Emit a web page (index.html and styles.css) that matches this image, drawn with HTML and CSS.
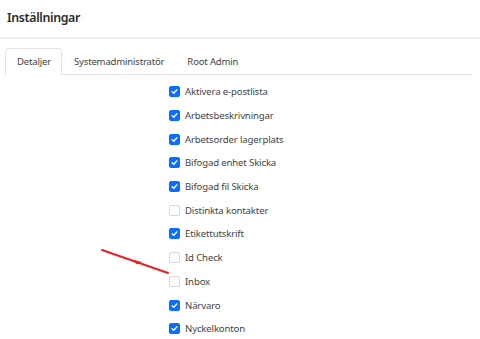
FILE: index.html
```html
<!DOCTYPE html>
<html lang="sv">

<head>
    <meta charset="UTF-8">
    <meta name="viewport" content="width=device-width, initial-scale=1.0">
    <title>Inställningar</title>
    <link rel="stylesheet" href="styles.css">
</head>

<body>
    <div class="header">
        <h1>Inställningar</h1>
    </div>
    <div class="content">
        <ul class="tabs">
            <li class="tab active">Detaljer</li>
            <li class="tab">Systemadministratör</li>
            <li class="tab">Root Admin</li>
        </ul>
        <div class="options">
            <label class="option"><span class="box checked"><svg viewBox="0 0 10 10"><path d="M2.4 5.2 L4.2 7 L7.6 3.2" /></svg></span>Aktivera e-postlista</label>
            <label class="option"><span class="box checked"><svg viewBox="0 0 10 10"><path d="M2.4 5.2 L4.2 7 L7.6 3.2" /></svg></span>Arbetsbeskrivningar</label>
            <label class="option"><span class="box checked"><svg viewBox="0 0 10 10"><path d="M2.4 5.2 L4.2 7 L7.6 3.2" /></svg></span>Arbetsorder lagerplats</label>
            <label class="option"><span class="box checked"><svg viewBox="0 0 10 10"><path d="M2.4 5.2 L4.2 7 L7.6 3.2" /></svg></span>Bifogad enhet Skicka</label>
            <label class="option"><span class="box checked"><svg viewBox="0 0 10 10"><path d="M2.4 5.2 L4.2 7 L7.6 3.2" /></svg></span>Bifogad fil Skicka</label>
            <label class="option"><span class="box"></span>Distinkta kontakter</label>
            <label class="option"><span class="box checked"><svg viewBox="0 0 10 10"><path d="M2.4 5.2 L4.2 7 L7.6 3.2" /></svg></span>Etikettutskrift</label>
            <label class="option"><span class="box"></span>Id Check</label>
            <label class="option"><span class="box"></span>Inbox</label>
            <label class="option"><span class="box checked"><svg viewBox="0 0 10 10"><path d="M2.4 5.2 L4.2 7 L7.6 3.2" /></svg></span>Närvaro</label>
            <label class="option"><span class="box checked"><svg viewBox="0 0 10 10"><path d="M2.4 5.2 L4.2 7 L7.6 3.2" /></svg></span>Nyckelkonton</label>
        </div>
        <!-- red annotation arrow -->
        <svg class="arrow" width="80" height="34" viewBox="0 0 80 34">
            <path d="M2 3 L68 26" stroke="#e8202a" stroke-width="2" stroke-linecap="round" fill="none" />
            <path d="M32 12.5 L42 15 L37 17.5 Z" fill="#e8202a" />
        </svg>
    </div>
</body>

</html>
```

FILE: styles.css
```css
body {
    margin: 0;
    background-color: #fff;
    font-family: 'Noto Sans', 'Open Sans', sans-serif;
    color: #333;
}

.header {
    padding: 8px 7px 10px;
    border-bottom: 2px solid #efefef;
}

h1 {
    margin: 0;
    font-size: 12.4px;
    font-weight: 600;
    letter-spacing: -0.35px;
    line-height: 19px;
    color: #2b2b2b;
}

.content {
    position: relative;
    margin: 9px 8px 0 5px;
}

.tabs {
    display: flex;
    list-style: none;
    margin: 0;
    padding: 0;
    border-bottom: 1px solid #e3e3e3;
}

.tab {
    padding: 0 10px 0 11px;
    height: 25px;
    line-height: 25px;
    font-size: 9.6px;
    letter-spacing: -0.2px;
    color: #444;
    border: 1px solid transparent;
    border-bottom: none;
    border-radius: 4px 4px 0 0;
    margin-bottom: -1px;
}

.tab.active {
    border-color: #e3e3e3;
    background-color: #fff;
    height: 26px;
}

.options {
    display: flex;
    flex-direction: column;
    padding: 5px 0 0 164px;
}

.option {
    display: flex;
    align-items: center;
    height: 23.7px;
    font-size: 9.6px;
    letter-spacing: -0.15px;
    color: #444;
}

.box {
    width: 9px;
    height: 9px;
    border: 1px solid #d9d9d9;
    border-radius: 2px;
    margin-right: 5px;
    background-color: #fff;
    display: flex;
}

.box.checked {
    background-color: #0d6efd;
    border-color: #0d6efd;
}

.box svg {
    width: 9px;
    height: 9px;
}

.box path {
    stroke: #fff;
    stroke-width: 1.6;
    fill: none;
    stroke-linecap: round;
    stroke-linejoin: round;
}

.arrow {
    position: absolute;
    left: 95px;
    top: 199px;
}
```
